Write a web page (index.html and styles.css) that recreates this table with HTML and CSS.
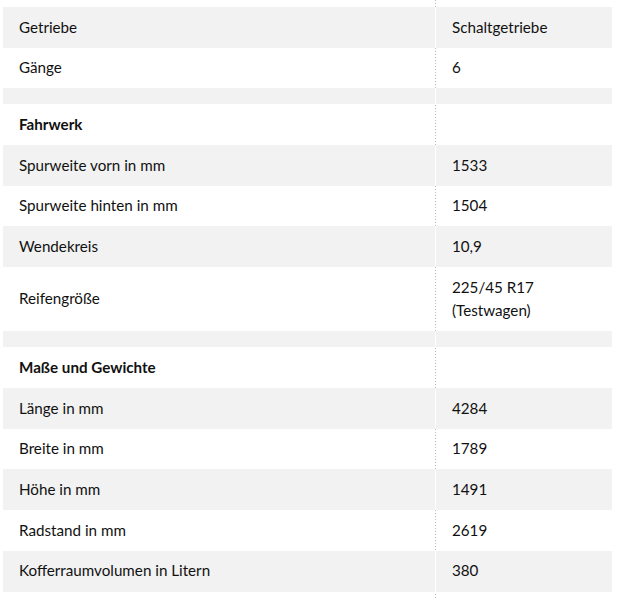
FILE: index.html
```html
<!DOCTYPE html>
<html lang="de">
<head>
<meta charset="utf-8">
<title>Technische Daten</title>
<link rel="stylesheet" href="styles.css">
</head>
<body>
<div class="wrap">
<table class="specs">
<tbody>
<tr class="g"><td>Getriebe</td><td>Schaltgetriebe</td></tr>
<tr class="w"><td>Gänge</td><td>6</td></tr>
<tr class="g sp"><td></td><td></td></tr>
<tr class="w head"><td>Fahrwerk</td><td></td></tr>
<tr class="g"><td>Spurweite vorn in mm</td><td>1533</td></tr>
<tr class="w"><td>Spurweite hinten in mm</td><td>1504</td></tr>
<tr class="g"><td>Wendekreis</td><td>10,9</td></tr>
<tr class="w"><td>Reifengröße</td><td>225/45 R17<br>(Testwagen)</td></tr>
<tr class="g sp"><td></td><td></td></tr>
<tr class="w head"><td>Maße und Gewichte</td><td></td></tr>
<tr class="g"><td>Länge in mm</td><td>4284</td></tr>
<tr class="w"><td>Breite in mm</td><td>1789</td></tr>
<tr class="g"><td>Höhe in mm</td><td>1491</td></tr>
<tr class="w"><td>Radstand in mm</td><td>2619</td></tr>
<tr class="g"><td>Kofferraumvolumen in Litern</td><td>380</td></tr>
</tbody>
</table>
</div>
</body>
</html>
```
FILE: styles.css
```css
html, body {
  margin: 0;
  padding: 0;
  background: #fff;
}
.wrap {
  width: 609px;
  margin-left: 3px;
  padding: 7px 0 20px;
  background-image: repeating-linear-gradient(to bottom, #b8b8b8 0 1px, transparent 1px 3px);
  background-size: 1px 100%;
  background-position: 432px 0;
  background-repeat: no-repeat;
}
.specs {
  width: 609px;
  border-collapse: separate;
  border-spacing: 0;
  font-family: "Lato", "Source Sans Pro", "Liberation Sans", sans-serif;
  font-size: 15.2px;
  line-height: 23.6px;
  color: #111;
  table-layout: fixed;
}
.specs td {
  padding: 8.55px 16px;
  vertical-align: middle;
}
.specs td:first-child {
  width: 400px;
}
.specs td:last-child {
  border-left: 1px solid transparent;
}
.g td {
  background: #f2f2f2;
}
.g td:last-child {
  border-left-color: #fff;
}
.sp td {
  padding: 0;
  height: 16px;
  line-height: 0;
}
.head td:first-child {
  font-weight: 700;
}
```
